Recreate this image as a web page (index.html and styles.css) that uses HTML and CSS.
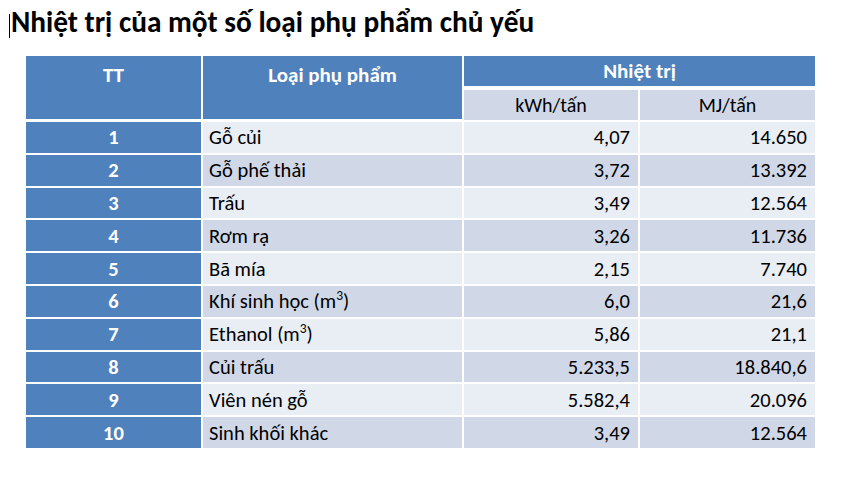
FILE: index.html
```html
<!DOCTYPE html>
<html lang="vi">
<head>
<meta charset="utf-8">
<title>Nhiệt trị của một số loại phụ phẩm chủ yếu</title>
<link rel="stylesheet" href="styles.css">
</head>
<body>
<h1 class="title"><span class="caret"></span>Nhiệt trị của một số loại phụ phẩm chủ yếu</h1>
<table class="heat">
  <colgroup>
    <col class="c-tt"><col class="c-name"><col class="c-kwh"><col class="c-mj">
  </colgroup>
  <thead>
    <tr>
      <th rowspan="2" class="h-main">TT</th>
      <th rowspan="2" class="h-main">Loại phụ phẩm</th>
      <th colspan="2" class="h-group last">Nhiệt trị</th>
    </tr>
    <tr>
      <th class="h-sub">kWh/tấn</th>
      <th class="h-sub last">MJ/tấn</th>
    </tr>
  </thead>
  <tbody>
    <tr><td class="tt">1</td><td class="name">Gỗ củi</td><td class="num">4,07</td><td class="num last">14.650</td></tr>
    <tr><td class="tt">2</td><td class="name">Gỗ phế thải</td><td class="num">3,72</td><td class="num last">13.392</td></tr>
    <tr><td class="tt">3</td><td class="name">Trấu</td><td class="num">3,49</td><td class="num last">12.564</td></tr>
    <tr><td class="tt">4</td><td class="name">Rơm rạ</td><td class="num">3,26</td><td class="num last">11.736</td></tr>
    <tr><td class="tt">5</td><td class="name">Bã mía</td><td class="num">2,15</td><td class="num last">7.740</td></tr>
    <tr><td class="tt">6</td><td class="name">Khí sinh học (m<sup>3</sup>)</td><td class="num">6,0</td><td class="num last">21,6</td></tr>
    <tr><td class="tt">7</td><td class="name">Ethanol (m<sup>3</sup>)</td><td class="num">5,86</td><td class="num last">21,1</td></tr>
    <tr><td class="tt">8</td><td class="name">Củi trấu</td><td class="num">5.233,5</td><td class="num last">18.840,6</td></tr>
    <tr><td class="tt">9</td><td class="name">Viên nén gỗ</td><td class="num">5.582,4</td><td class="num last">20.096</td></tr>
    <tr><td class="tt">10</td><td class="name">Sinh khối khác</td><td class="num">3,49</td><td class="num last">12.564</td></tr>
  </tbody>
</table>
</body>
</html>
```
FILE: styles.css
```css
html, body {
  margin: 0;
  padding: 0;
  background: #ffffff;
}
body {
  font-family: Carlito, Calibri, "Open Sans", "Noto Sans", sans-serif;
  color: #000;
}
.title {
  margin: 0;
  padding: 6px 0 0 9px;
  height: 48px;
  box-sizing: border-box;
  font-size: 29.3px;
  font-weight: bold;
  line-height: 32px;
  white-space: nowrap;
}
.caret {
  display: inline-block;
  width: 1px;
  height: 24px;
  background: #000;
  vertical-align: -6px;
  margin-right: 1px;
}
.heat {
  margin: 8px 0 0 26px;
  border-collapse: separate;
  border-spacing: 0;
  table-layout: fixed;
  width: 789px;
  font-size: 20.5px;
}
.c-tt { width: 177px; }
.c-name { width: 261px; }
.c-kwh { width: 176px; }
.c-mj { width: 175px; }
.heat th, .heat td {
  box-sizing: border-box;
  padding: 0;
  border-right: 2px solid #fff;
  border-bottom: 2px solid #fff;
  white-space: nowrap;
}
.heat .last { border-right: 0; }
.heat .h-main {
  background: #4f81bd;
  color: #fff;
  font-size: 21px;
  font-weight: bold;
  vertical-align: top;
  padding-top: 6px;
  height: 66px;
  border-bottom-width: 3px;
}
.heat .h-group {
  background: #4f81bd;
  color: #fff;
  font-size: 21px;
  font-weight: bold;
  height: 34px;
  border-bottom-width: 4px;
}
.heat .h-sub {
  background: #d0d8e8;
  font-size: 20px;
  font-weight: normal;
  height: 32px;
  color: #000;
}
.heat td {
  height: 32.8px;
}
.heat .tt {
  background: #4f81bd;
  color: #fff;
  font-weight: bold;
  text-align: center;
}
.heat .name {
  padding-left: 6px;
  text-align: left;
}
.heat .num {
  text-align: right;
  padding-right: 8px;
}
.heat tbody tr:nth-child(odd) .name,
.heat tbody tr:nth-child(odd) .num { background: #e9edf4; }
.heat tbody tr:nth-child(even) .name,
.heat tbody tr:nth-child(even) .num { background: #d0d8e8; }
sup {
  font-size: 0.66em;
  vertical-align: 0.6em;
  line-height: 0;
}
```
